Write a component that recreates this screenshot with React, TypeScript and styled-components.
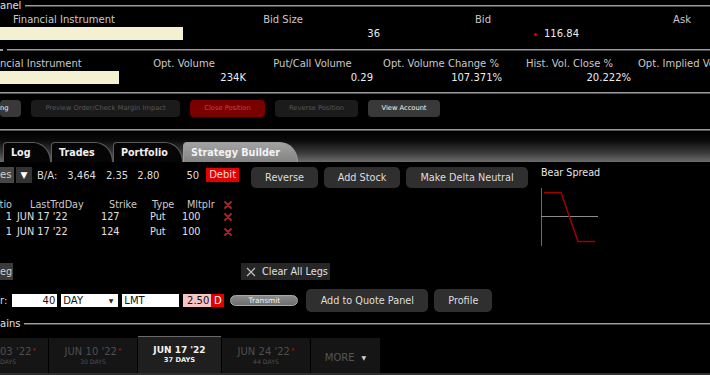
import React from "react";
import styled, { createGlobalStyle } from "styled-components";

const GlobalStyle = createGlobalStyle`
  html, body {
    margin: 0;
    padding: 0;
    background: #000;
  }
  body {
    font-family: "DejaVu Sans", Verdana, sans-serif;
    color: #ddd;
  }
`;

const Screen = styled.div`
  width: 710px;
  height: 375px;
  overflow: hidden;
  background: #000;
  display: flex;
  flex-direction: column;
  font-size: 10px;
  white-space: nowrap;
`;

/* ---------- section titles ---------- */

const TitleRow = styled.div<{ $h?: number; $mt?: number }>`
  display: flex;
  align-items: center;
  gap: 4px;
  height: ${(p) => p.$h ?? 11}px;
  line-height: ${(p) => p.$h ?? 11}px;
  margin-top: ${(p) => p.$mt ?? 0}px;
  color: #e0e0e0;
  font-size: 10px;
`;

const Rule = styled.div`
  flex: 1;
  height: 0;
  border-top: 1px solid #9c9c9c;
  border-bottom: 1px solid #4a4a4a;
`;

const Dot = styled.span`
  display: inline-block;
  width: 3px;
  height: 2px;
  background: #999;
`;

/* ---------- quote rows ---------- */

const QuoteGrid = styled.div<{ $cols: string; $mt?: number }>`
  display: grid;
  grid-template-columns: ${(p) => p.$cols};
  grid-template-rows: 14px 13px;
  margin-top: ${(p) => p.$mt ?? 0}px;
  align-items: center;
`;

const HeadCell = styled.div<{ $align?: string; $pl?: number }>`
  text-align: ${(p) => p.$align ?? "center"};
  padding-left: ${(p) => p.$pl ?? 0}px;
  line-height: 14px;
  color: #c9c9c9;
  overflow: visible;
`;

const ValCell = styled.div<{ $pr?: number }>`
  text-align: right;
  padding-right: ${(p) => p.$pr ?? 0}px;
  line-height: 13px;
  color: #ececec;
`;

const Cream = styled.div<{ $w: number }>`
  width: ${(p) => p.$w}px;
  height: 13px;
  background: #f4f1d3;
`;

const RedDot = styled.span`
  display: inline-block;
  width: 3px;
  height: 3px;
  border-radius: 50%;
  background: #e00000;
  margin-right: 7px;
  vertical-align: middle;
`;

const ThickRule = styled.div<{ $mt?: number }>`
  margin-top: ${(p) => p.$mt ?? 0}px;
  height: 0;
  border-top: 1px solid #9a9a9a;
  border-bottom: 1px solid #555;
`;

/* ---------- order action bar ---------- */

const ActionBar = styled.div`
  display: flex;
  gap: 10px;
  padding-top: 6px;
  height: 17px;
`;

const ActionButton = styled.div<{ $w: number; $kind: "on" | "off" | "danger"; $align?: string }>`
  width: ${(p) => p.$w}px;
  height: 17px;
  line-height: 17px;
  border-radius: 4px;
  font-size: 6.7px;
  text-align: ${(p) => p.$align ?? "center"};
  background: ${(p) => (p.$kind === "danger" ? "#7a0000" : p.$kind === "off" ? "#1b1b1b" : "#393939")};
  color: ${(p) => (p.$kind === "danger" ? "#c44848" : p.$kind === "off" ? "#585858" : "#f4f4f4")};
`;

/* ---------- tabs ---------- */

const TabStrip = styled.div`
  height: 31px;
  display: flex;
  align-items: flex-end;
  padding-left: 3px;
  background: linear-gradient(to bottom, #000 0%, #0a0a0a 30%, #3a3a3a 70%, #6c6c6c 100%);
`;

const Tab = styled.div<{ $w: number; $active?: boolean }>`
  box-sizing: border-box;
  width: ${(p) => p.$w}px;
  height: 20px;
  line-height: 19px;
  padding-left: 7px;
  border: 1px solid ${(p) => (p.$active ? "#9a9a9a" : "#5c5c5c")};
  border-bottom: none;
  border-radius: 4px 18px 0 0 / 4px 20px 0 0;
  background: ${(p) => (p.$active ? "linear-gradient(#a2a2a2, #848484)" : "#050505")};
  color: ${(p) => (p.$active ? "#f3f3f3" : "#f0f0f0")};
  font-weight: bold;
  font-size: 9.6px;
`;

/* ---------- strategy workspace ---------- */

const Workspace = styled.div`
  display: flex;
`;

const LegsColumn = styled.div`
  width: 536px;
  display: flex;
  flex-direction: column;
`;

const SummaryRow = styled.div`
  display: flex;
  align-items: flex-start;
  padding-top: 5px;
  height: 21px;
`;

const Chip = styled.div<{ $w: number; $bg: string; $ml?: number }>`
  width: ${(p) => p.$w}px;
  height: 16px;
  line-height: 16px;
  margin-left: ${(p) => p.$ml ?? 0}px;
  background: ${(p) => p.$bg};
  color: #d0d0d0;
  font-size: 10px;
  text-align: left;
`;

const ArrowChip = styled(Chip)`
  text-align: center;
  color: #fff;
  font-size: 9px;
`;

const Figure = styled.span<{ $ml: number }>`
  margin-left: ${(p) => p.$ml}px;
  line-height: 17px;
  color: #dcdcdc;
`;

const DebitTag = styled.span`
  margin-left: 7px;
  margin-top: 1px;
  height: 14px;
  line-height: 14px;
  padding: 0 3px;
  background: #e40000;
  color: #ffd8d8;
`;

const Button = styled.div<{ $w: number; $ml?: number; $h?: number }>`
  width: ${(p) => p.$w}px;
  height: ${(p) => p.$h ?? 21}px;
  line-height: ${(p) => p.$h ?? 21}px;
  margin-left: ${(p) => p.$ml ?? 6}px;
  border-radius: 5px;
  background: #2f2f2f;
  color: #dedede;
  font-size: 9.7px;
  text-align: center;
`;

const LegsTable = styled.div`
  display: grid;
  grid-template-columns: 14px 86px 48px 32px 42px 14px;
  grid-template-rows: 12px 12px 15px;
  align-items: end;
  margin-top: 11px;
  font-size: 9.7px;
`;

const LegCell = styled.div<{ $pl?: number; $right?: boolean; $head?: boolean }>`
  line-height: 12px;
  height: 12px;
  padding-left: ${(p) => p.$pl ?? 0}px;
  padding-right: ${(p) => (p.$right ? 2 : 0)}px;
  color: ${(p) => (p.$head ? "#cacaca" : "#e0e0e0")};
  display: flex;
  align-items: center;
  justify-content: ${(p) => (p.$right ? "flex-end" : "flex-start")};
`;

const LegsFooter = styled.div`
  display: flex;
  margin-top: 25px;
  height: 17px;
`;

const SmallChip = styled.div`
  width: 13px;
  height: 17px;
  line-height: 17px;
  background: #3a3a3a;
  color: #d0d0d0;
  font-size: 9.7px;
`;

const ClearButton = styled.div`
  margin-left: 228px;
  width: 89px;
  height: 17px;
  display: flex;
  align-items: center;
  gap: 6px;
  padding-left: 5px;
  box-sizing: border-box;
  background: #262626;
  color: #e0e0e0;
  font-size: 9.7px;
`;

const ChartColumn = styled.div`
  margin-left: 5px;
  display: flex;
  flex-direction: column;
`;

const ChartLabel = styled.div`
  padding-top: 5px;
  line-height: 12px;
  color: #e6e6e6;
  font-size: 9.6px;
`;

const ChartBox = styled.svg`
  margin-top: 9px;
  display: block;
`;

/* ---------- order entry ---------- */

const OrderRow = styled.div`
  display: flex;
  align-items: center;
  margin-top: 9px;
  height: 23px;
`;

const Field = styled.div<{ $w: number; $ml: number; $right?: boolean; $bg?: string }>`
  box-sizing: border-box;
  width: ${(p) => p.$w}px;
  height: 13px;
  line-height: 13px;
  margin-left: ${(p) => p.$ml}px;
  padding: 0 2px;
  background: ${(p) => p.$bg ?? "#fff"};
  color: #111;
  font-size: 10px;
  display: flex;
  justify-content: ${(p) => (p.$right ? "flex-end" : "space-between")};
  align-items: center;
`;

const Caret = styled.span`
  font-size: 6px;
  margin-right: 3px;
  color: #222;
`;

const SideTag = styled.div`
  width: 13px;
  height: 13px;
  line-height: 13px;
  background: #e20000;
  color: #fff;
  text-align: center;
  font-size: 10px;
`;

const TransmitPill = styled.div`
  box-sizing: border-box;
  width: 68px;
  height: 11px;
  line-height: 9px;
  margin-left: 6px;
  border: 1px solid #a9a9a9;
  border-radius: 6px;
  background: linear-gradient(#8a8a8a, #6e6e6e);
  color: #f0f0f0;
  font-size: 7.4px;
  text-align: center;
`;

/* ---------- expiry chains ---------- */

const ExpiryStrip = styled.div`
  display: flex;
  align-items: flex-end;
  gap: 1px;
  margin-top: 6px;
  height: 37px;
  border-bottom: 2px solid #2e2e2e;
`;

const Expiry = styled.div<{ $w: number; $active?: boolean; $left?: boolean }>`
  box-sizing: border-box;
  width: ${(p) => p.$w}px;
  height: ${(p) => (p.$active ? 37 : 35)}px;
  display: flex;
  flex-direction: column;
  justify-content: center;
  align-items: ${(p) => (p.$left ? "flex-start" : "center")};
  background: ${(p) => (p.$active ? "#1f1f1f" : "#151515")};
  border-top: ${(p) => (p.$active ? "1px solid #6a6a6a" : "none")};
  color: ${(p) => (p.$active ? "#f2f2f2" : "#4f4f4f")};
`;

const ExpiryDate = styled.div<{ $active?: boolean }>`
  line-height: 11px;
  font-size: ${(p) => (p.$active ? 9 : 10)}px;
  font-weight: ${(p) => (p.$active ? "bold" : "normal")};
`;

const ExpiryDays = styled.div<{ $active?: boolean }>`
  line-height: 9px;
  font-size: ${(p) => (p.$active ? 6.7 : 6.2)}px;
  font-weight: ${(p) => (p.$active ? "bold" : "normal")};
`;

const Star = styled.span`
  color: #b01818;
  font-size: 7px;
  vertical-align: top;
  margin-left: 1px;
`;

const MoreLabel = styled.div`
  font-size: 10px;
  color: #555;
  display: flex;
  align-items: center;
  gap: 7px;
  margin-top: 3px;
`;

const MoreCaret = styled.span`
  font-size: 6px;
  color: #d0d0d0;
`;

const RemoveIcon = () => (
  <svg width="8" height="8" viewBox="0 0 8 8">
    <path d="M1 1L7 7M7 1L1 7" stroke="#a8262a" strokeWidth="1.8" strokeLinecap="round" />
  </svg>
);

const ClearIcon = () => (
  <svg width="10" height="10" viewBox="0 0 10 10">
    <path d="M1 1L9 9M9 1L1 9" stroke="#bdbdbd" strokeWidth="1.2" />
  </svg>
);

const legs = [
  { ratio: 1, day: "JUN 17 '22", strike: 127, type: "Put", mult: 100 },
  { ratio: 1, day: "JUN 17 '22", strike: 124, type: "Put", mult: 100 },
];

const expiries = [
  { date: "JUN 10 '22", days: "30 DAYS" },
  { date: "JUN 17 '22", days: "37 DAYS", active: true },
  { date: "JUN 24 '22", days: "44 DAYS" },
];

export default function App() {
  return (
    <Screen>
      <GlobalStyle />

      <TitleRow>
        <span>anel</span>
        <Rule />
      </TitleRow>
      <QuoteGrid $cols="186px 194px 206px 192px" $mt={2}>
        <HeadCell $align="left" $pl={13}>Financial Instrument</HeadCell>
        <HeadCell>Bid Size</HeadCell>
        <HeadCell>Bid</HeadCell>
        <HeadCell>Ask</HeadCell>
        <Cream $w={183} />
        <ValCell>36</ValCell>
        <ValCell $pr={7}>
          <RedDot />
          116.84
        </ValCell>
        <ValCell />
      </QuoteGrid>

      <TitleRow $mt={4}>
        <Dot />
        <Rule />
      </TitleRow>
      <QuoteGrid $cols="120px 128px 129px 128px 129px 160px" $mt={2}>
        <HeadCell $align="left">ncial Instrument</HeadCell>
        <HeadCell>Opt. Volume</HeadCell>
        <HeadCell>Put/Call Volume</HeadCell>
        <HeadCell>Opt. Volume Change %</HeadCell>
        <HeadCell>Hist. Vol. Close %</HeadCell>
        <HeadCell $align="left" $pl={4}>Opt. Implied Volatility %</HeadCell>
        <Cream $w={119} />
        <ValCell $pr={2}>234K</ValCell>
        <ValCell $pr={4}>0.29</ValCell>
        <ValCell $pr={3}>107.371%</ValCell>
        <ValCell $pr={3}>20.222%</ValCell>
        <ValCell />
      </QuoteGrid>
      <ThickRule $mt={8} />

      <ActionBar>
        <ActionButton $w={21} $kind="on" $align="left">ng</ActionButton>
        <ActionButton $w={149} $kind="off">Preview Order/Check Margin Impact</ActionButton>
        <ActionButton $w={75} $kind="danger">Close Position</ActionButton>
        <ActionButton $w={83} $kind="off">Reverse Position</ActionButton>
        <ActionButton $w={72} $kind="on">View Account</ActionButton>
      </ActionBar>

      <ThickRule $mt={12} />
      <TabStrip>
        <Tab $w={48}>Log</Tab>
        <Tab $w={62}>Trades</Tab>
        <Tab $w={70}>Portfolio</Tab>
        <Tab $w={115} $active>Strategy Builder</Tab>
      </TabStrip>

      <Workspace>
        <LegsColumn>
          <SummaryRow>
            <Chip $w={14} $bg="#464646">es</Chip>
            <ArrowChip $w={16} $bg="#333" $ml={2}>▼</ArrowChip>
            <Figure $ml={5}>B/A:</Figure>
            <Figure $ml={10}>3,464</Figure>
            <Figure $ml={10}>2.35</Figure>
            <Figure $ml={9}>2.80</Figure>
            <Figure $ml={27}>50</Figure>
            <DebitTag>Debit</DebitTag>
            <Button $w={67} $ml={12}>Reverse</Button>
            <Button $w={76}>Add Stock</Button>
            <Button $w={122}>Make Delta Neutral</Button>
          </SummaryRow>

          <LegsTable>
            <LegCell $head $right>atio</LegCell>
            <LegCell $head $pl={16}>LastTrdDay</LegCell>
            <LegCell $head $pl={9}>Strike</LegCell>
            <LegCell $head $pl={4}>Type</LegCell>
            <LegCell $head $pl={7}>Mltplr</LegCell>
            <LegCell $pl={2}>
              <RemoveIcon />
            </LegCell>
            {legs.map((leg, i) => (
              <React.Fragment key={i}>
                <LegCell $right>{leg.ratio}</LegCell>
                <LegCell $pl={3}>{leg.day}</LegCell>
                <LegCell $pl={1}>{leg.strike}</LegCell>
                <LegCell $pl={2}>{leg.type}</LegCell>
                <LegCell $pl={2}>{leg.mult}</LegCell>
                <LegCell $pl={2}>
                  <RemoveIcon />
                </LegCell>
              </React.Fragment>
            ))}
          </LegsTable>

          <LegsFooter>
            <SmallChip>eg</SmallChip>
            <ClearButton>
              <ClearIcon />
              Clear All Legs
            </ClearButton>
          </LegsFooter>
        </LegsColumn>

        <ChartColumn>
          <ChartLabel>Bear Spread</ChartLabel>
          <ChartBox width="60" height="58" viewBox="0 0 60 58">
            <line x1="0.5" y1="0" x2="0.5" y2="58" stroke="#6a6a6a" />
            <line x1="0" y1="28.5" x2="57" y2="28.5" stroke="#8c8c8c" />
            <polyline points="3,4.5 20,4.5 37,53.5 54,53.5" fill="none" stroke="#a00000" strokeWidth="1.5" />
          </ChartBox>
        </ChartColumn>
      </Workspace>

      <OrderRow>
        <Figure $ml={0}>r:</Figure>
        <Field $w={45} $ml={5} $right>40</Field>
        <Field $w={57} $ml={4}>
          DAY
          <Caret>▼</Caret>
        </Field>
        <Field $w={57} $ml={4}>LMT</Field>
        <Field $w={28} $ml={4} $right $bg="#f6c4c4">2.50</Field>
        <SideTag>D</SideTag>
        <TransmitPill>Transmit</TransmitPill>
        <Button $w={122} $ml={8} $h={23}>Add to Quote Panel</Button>
        <Button $w={58} $ml={6} $h={23}>Profile</Button>
      </OrderRow>

      <TitleRow $h={13} $mt={5}>
        <span>ains</span>
        <Rule />
      </TitleRow>

      <ExpiryStrip>
        <Expiry $w={48} $left>
          <ExpiryDate>
            03 '22<Star>*</Star>
          </ExpiryDate>
          <ExpiryDays>DAYS</ExpiryDays>
        </Expiry>
        {expiries.map((e) => (
          <Expiry key={e.date} $w={e.active ? 83 : 88} $active={e.active}>
            <ExpiryDate $active={e.active}>
              {e.date}
              {!e.active && <Star>*</Star>}
            </ExpiryDate>
            <ExpiryDays $active={e.active}>{e.days}</ExpiryDays>
          </Expiry>
        ))}
        <Expiry $w={69}>
          <MoreLabel>
            MORE <MoreCaret>▼</MoreCaret>
          </MoreLabel>
        </Expiry>
      </ExpiryStrip>
    </Screen>
  );
}
